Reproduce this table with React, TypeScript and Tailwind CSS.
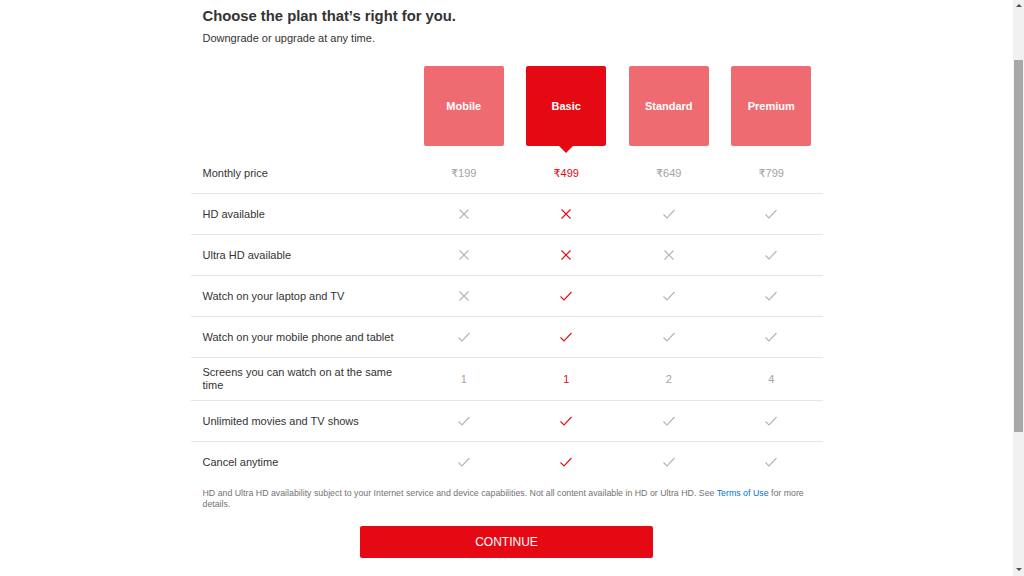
import React from 'react';

type Cell = string | boolean;

const plans = ['Mobile', 'Basic', 'Standard', 'Premium'];
const selected = 1;

const rows: { label: string; values: Cell[] }[] = [
  { label: 'Monthly price', values: ['₹199', '₹499', '₹649', '₹799'] },
  { label: 'HD available', values: [false, false, true, true] },
  { label: 'Ultra HD available', values: [false, false, false, true] },
  { label: 'Watch on your laptop and TV', values: [false, true, true, true] },
  { label: 'Watch on your mobile phone and tablet', values: [true, true, true, true] },
  { label: 'Screens you can watch on at the same time', values: ['1', '1', '2', '4'] },
  { label: 'Unlimited movies and TV shows', values: [true, true, true, true] },
  { label: 'Cancel anytime', values: [true, true, true, true] },
];

function CheckIcon({ red }: { red: boolean }) {
  return (
    <svg width="14" height="12" viewBox="0 0 14 12" fill="none">
      <path d="M1.5 6.5 L5 10 L12.5 2" stroke={red ? '#e50914' : '#b3b3b3'} strokeWidth="1.1" />
    </svg>
  );
}

function CrossIcon({ red }: { red: boolean }) {
  return (
    <svg width="12" height="12" viewBox="0 0 12 12" fill="none">
      <path d="M1.5 1.5 L10.5 10.5 M10.5 1.5 L1.5 10.5" stroke={red ? '#e50914' : '#b3b3b3'} strokeWidth="1.1" />
    </svg>
  );
}

function ValueCell({ value, red }: { value: Cell; red: boolean }) {
  if (value === true) return <CheckIcon red={red} />;
  if (value === false) return <CrossIcon red={red} />;
  return <span className={red ? 'text-[#e50914]' : 'text-[#a3a3a3]'}>{value}</span>;
}

export default function App() {
  return (
    <div className="flex h-[576px] overflow-hidden bg-white" style={{ fontFamily: '"Liberation Sans", Arial, "DejaVu Sans", sans-serif' }}>
      <main className="flex-1">
        <div className="w-[632px] mx-auto">
          <div className="pl-3 pt-[6px]">
            <h1 className="text-[14.8px] leading-5 font-bold text-[#333]">Choose the plan that’s right for you.</h1>
            <p className="mt-1 text-[11px] leading-4 text-[#333]">Downgrade or upgrade at any time.</p>
          </div>

          <div className="grid grid-cols-[222px_repeat(4,1fr)] mt-5">
            <div />
            {plans.map((p, i) => (
              <div key={p} className="flex justify-center">
                <div
                  className={`relative w-20 h-20 rounded-[2px] flex items-center justify-center text-white text-[11px] font-bold ${
                    i === selected ? 'bg-[#e50914]' : 'bg-[#ef6b72]'
                  }`}
                >
                  {p}
                  {i === selected && (
                    <div className="absolute top-full left-1/2 -translate-x-1/2 w-0 h-0 border-l-[7px] border-r-[7px] border-t-[7px] border-l-transparent border-r-transparent border-t-[#e50914]" />
                  )}
                </div>
              </div>
            ))}
          </div>

          <div className="mt-[7px]">
            {rows.map((r, ri) => (
              <div
                key={r.label}
                className={`grid grid-cols-[222px_repeat(4,1fr)] items-center box-content ${
                  ri === 5 ? 'min-h-[42px]' : 'h-10'
                } ${ri < rows.length - 1 ? 'border-b border-[#e6e6e6]' : ''}`}
              >
                <div className="pl-3 pr-[10px] text-[11px] leading-[13px] text-[#333]">{r.label}</div>
                {r.values.map((v, i) => (
                  <div key={i} className="flex justify-center text-[11px]">
                    <ValueCell value={v} red={i === selected} />
                  </div>
                ))}
              </div>
            ))}
          </div>

          <p className="mt-[6px] pl-3 pr-3 text-[8.8px] leading-[11px] text-[#737373]">
            HD and Ultra HD availability subject to your Internet service and device capabilities. Not all content available in HD or Ultra HD. See{' '}
            <span className="text-[#0071eb]">Terms of Use</span> for more details.
          </p>

          <div className="flex justify-center mt-4">
            <button className="w-[293px] h-8 rounded-[2px] bg-[#e50914] text-white text-[12px]">CONTINUE</button>
          </div>
        </div>
      </main>

      <div className="w-[11px] bg-[#f1f1f1] flex flex-col items-center">
        <div className="mt-[4px] w-0 h-0 border-l-[3px] border-r-[3px] border-b-[3px] border-l-transparent border-r-transparent border-b-[#505050]" />
        <div className="mt-[53px] w-[9px] h-[372px] bg-[#a8a8a8]" />
        <div className="mt-auto mb-[5px] w-0 h-0 border-l-[3px] border-r-[3px] border-t-[3px] border-l-transparent border-r-transparent border-t-[#505050]" />
      </div>
    </div>
  );
}
